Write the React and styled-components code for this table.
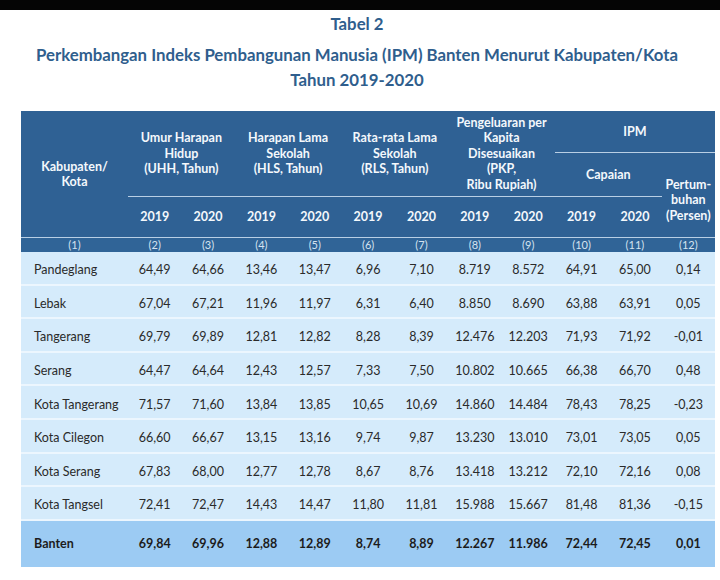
import React from 'react';
import styled, { createGlobalStyle } from 'styled-components';

const GlobalStyle = createGlobalStyle`
    body {
        margin: 0;
        background: #fff;
        font-family: Lato, "Open Sans", sans-serif;
    }
`;

const Page = styled.div`
    width: 720px;
    height: 580px;
    overflow: hidden;
    background: #fff;
`;

const TopBar = styled.div`
    height: 10px;
    background: #050505;
`;

const Heading = styled.div`
    text-align: center;
    color: #2f5e8d;
    font-weight: 700;
    font-size: 16.8px;
    line-height: 20px;
    margin-top: ${props => props.$gap}px;
    padding-right: 6px;
`;

const Table = styled.table`
    margin: 21px 0 0 21px;
    width: 694px;
    border-collapse: collapse;
    table-layout: fixed;
`;

const HeadCell = styled.th`
    background: #2f6194;
    color: #f4f8fc;
    font-size: 12.5px;
    font-weight: 700;
    line-height: 15.5px;
    text-align: center;
    vertical-align: middle;
    padding: ${props => props.$pad || '0'};
    height: ${props => props.$h}px;
    border-bottom: ${props => props.$line ? '1px solid #b9cfe5' : 'none'};
`;

const IndexCell = styled.td`
    background: #306497;
    color: #d5e3f0;
    font-size: 11px;
    text-align: center;
    height: 14px;
    line-height: 14px;
    padding: 0;
    border-top: 1px solid #b9cfe5;
`;

const Row = styled.tr`
    background: ${props => props.$total ? '#9ccbf3' : '#d5ebfb'};
    border-bottom: ${props => props.$total ? 'none' : '2px solid #ecf6fe'};
`;

const Cell = styled.td`
    height: ${props => props.$total ? 46 : 27.6}px;
    padding: ${props => props.$total ? '0' : '4px 0 0'};
    font-size: 12.5px;
    font-weight: ${props => props.$total ? 700 : 400};
    color: ${props => props.$total ? '#1c1c1c' : '#2a2a2a'};
    text-align: center;
    vertical-align: middle;
    white-space: nowrap;
`;

const NameCell = styled(Cell)`
    text-align: left;
    padding-left: 13px;
`;

const rows = [
    ['Pandeglang', '64,49', '64,66', '13,46', '13,47', '6,96', '7,10', '8.719', '8.572', '64,91', '65,00', '0,14'],
    ['Lebak', '67,04', '67,21', '11,96', '11,97', '6,31', '6,40', '8.850', '8.690', '63,88', '63,91', '0,05'],
    ['Tangerang', '69,79', '69,89', '12,81', '12,82', '8,28', '8,39', '12.476', '12.203', '71,93', '71,92', '-0,01'],
    ['Serang', '64,47', '64,64', '12,43', '12,57', '7,33', '7,50', '10.802', '10.665', '66,38', '66,70', '0,48'],
    ['Kota Tangerang', '71,57', '71,60', '13,84', '13,85', '10,65', '10,69', '14.860', '14.484', '78,43', '78,25', '-0,23'],
    ['Kota Cilegon', '66,60', '66,67', '13,15', '13,16', '9,74', '9,87', '13.230', '13.010', '73,01', '73,05', '0,05'],
    ['Kota Serang', '67,83', '68,00', '12,77', '12,78', '8,67', '8,76', '13.418', '13.212', '72,10', '72,16', '0,08'],
    ['Kota Tangsel', '72,41', '72,47', '14,43', '14,47', '11,80', '11,81', '15.988', '15.667', '81,48', '81,36', '-0,15'],
];

const total = ['Banten', '69,84', '69,96', '12,88', '12,89', '8,74', '8,89', '12.267', '11.986', '72,44', '72,45', '0,01'];

const groups = [
    <>Umur Harapan<br />Hidup<br />(UHH, Tahun)</>,
    <>Harapan Lama<br />Sekolah<br />(HLS, Tahun)</>,
    <>Rata-rata Lama<br />Sekolah<br />(RLS, Tahun)</>,
    <>Pengeluaran per<br />Kapita<br />Disesuaikan<br />(PKP,<br />Ribu Rupiah)</>,
];

const DataRow = ({ values, isTotal }) => (
    <Row $total={isTotal}>
        <NameCell $total={isTotal}>{values[0]}</NameCell>
        {values.slice(1).map((v, i) => (
            <Cell key={i} $total={isTotal}>{v}</Cell>
        ))}
    </Row>
);

const App = () => {
    return (
        <Page>
            <GlobalStyle />
            <TopBar />
            <Heading $gap={4}>Tabel 2</Heading>
            <Heading $gap={11}>Perkembangan Indeks Pembangunan Manusia (IPM) Banten Menurut Kabupaten/Kota</Heading>
            <Heading $gap={5}>Tahun 2019-2020</Heading>
            <Table>
                <colgroup>
                    <col style={{ width: '107px' }} />
                    {Array.from({ length: 11 }).map((_, i) => <col key={i} />)}
                </colgroup>
                <thead>
                    <tr>
                        <HeadCell rowSpan={3} $h={41}>Kabupaten/<br />Kota</HeadCell>
                        {groups.map((g, i) => (
                            <HeadCell key={i} colSpan={2} rowSpan={2} $line>{g}</HeadCell>
                        ))}
                        <HeadCell colSpan={3} $h={41} $line>IPM</HeadCell>
                    </tr>
                    <tr>
                        <HeadCell colSpan={2} $h={43} $line>Capaian</HeadCell>
                        <HeadCell rowSpan={2} $pad="10px 0 0">Pertum-<br />buhan<br />(Persen)</HeadCell>
                    </tr>
                    <tr>
                        {Array.from({ length: 5 }).flatMap((_, i) => [
                            <HeadCell key={i + 'a'} $h={40}>2019</HeadCell>,
                            <HeadCell key={i + 'b'} $h={40}>2020</HeadCell>,
                        ])}
                    </tr>
                    <tr>
                        {Array.from({ length: 12 }).map((_, i) => (
                            <IndexCell key={i}>({i + 1})</IndexCell>
                        ))}
                    </tr>
                </thead>
                <tbody>
                    {rows.map(r => <DataRow key={r[0]} values={r} />)}
                    <DataRow values={total} isTotal />
                </tbody>
            </Table>
        </Page>
    );
};

export default App;
